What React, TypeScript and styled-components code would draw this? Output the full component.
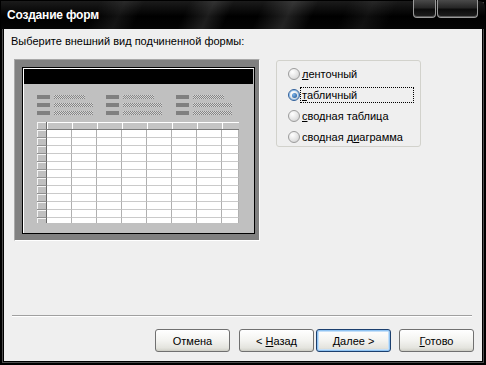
import React from 'react';
import styled, { createGlobalStyle } from 'styled-components';

const GlobalStyle = createGlobalStyle`
  html, body {
    margin: 0;
    padding: 0;
    background: #000;
  }
  * {
    box-sizing: border-box;
  }
`;

const Window = styled.div`
  width: 486px;
  height: 365px;
  display: flex;
  flex-direction: column;
  background: #000;
  border: 1px solid #000;
  padding: 0 3px 3px 3px;
  box-shadow: inset 0 0 0 1px #000, inset 0 0 0 2px #4e4e4e;
  font-family: 'Liberation Sans', Arial, sans-serif;
`;

const TitleBar = styled.div`
  height: 28px;
  margin: 0 -3px;
  padding: 0 4px 0 6px;
  display: flex;
  justify-content: space-between;
  align-items: flex-start;
  background:
    linear-gradient(115deg,
      transparent 0 20%,
      rgba(255, 255, 255, 0.07) 25%,
      transparent 29%,
      transparent 38%,
      rgba(255, 255, 255, 0.11) 43%,
      transparent 47%,
      transparent 53%,
      rgba(255, 255, 255, 0.13) 59%,
      transparent 64%,
      transparent 70%,
      rgba(255, 255, 255, 0.06) 75%,
      transparent 80%),
    linear-gradient(#1b1b1b, #000 55%, #050505);
  border-radius: 0 6px 0 0;
`;

const Title = styled.div`
  color: #fff;
  font-weight: bold;
  font-size: 12px;
  line-height: 28px;
  letter-spacing: -0.2px;
`;

const TitleButtons = styled.div`
  display: flex;
  gap: 1px;
  margin-top: -1px;
  margin-right: 3px;
`;

const TitleButton = styled.div<{ $w: number }>`
  width: ${({ $w }) => $w}px;
  height: 18px;
  border: 1px solid #9a9a9a;
  border-top: none;
  border-radius: 0 0 4px 4px;
  background: linear-gradient(#4a4a4a, #262626 45%, #0c0c0c 55%, #1e1e1e);
  box-shadow: inset 0 -1px 0 #5a5a5a;
`;

const Client = styled.div`
  flex: 1;
  display: flex;
  flex-direction: column;
  background: #efefef;
  padding: 6px 6px 9px 6px;
  font-size: 11px;
  color: #000;
`;

const Prompt = styled.div`
  line-height: 13px;
  padding-left: 1px;
`;

const ContentRow = styled.div`
  display: flex;
  align-items: flex-start;
  margin-top: 11px;
`;

const PreviewFrame = styled.div`
  margin-left: 4px;
  width: 246px;
  height: 182px;
  background: #808080;
  border: 1px solid;
  border-color: #a8a8a8 #ffffff #ffffff #a8a8a8;
  padding: 7px 0 0 7px;
`;

const PreviewPanel = styled.div`
  width: 233px;
  height: 167px;
  border: 1px solid #000;
  background: #c0c0c0;
  box-shadow: inset 1px 1px 0 #fff;
  padding: 1px 0 0 1px;
  display: flex;
  flex-direction: column;
`;

const FormHeader = styled.div`
  width: 229px;
  height: 15px;
  background: #000;
`;

const FieldColumns = styled.div`
  display: flex;
  margin: 11px 0 0 13px;
`;

const FieldColumn = styled.div`
  width: 69px;
  display: flex;
  flex-direction: column;
  gap: 4px;
  &:nth-child(2) {
    width: 70px;
  }
`;

const FieldRow = styled.div`
  display: flex;
  gap: 4px;
  height: 4px;
`;

const FieldLabel = styled.div`
  width: 13px;
  background: #808080;
`;

const FieldBox = styled.div<{ $w: number }>`
  width: ${({ $w }) => $w}px;
  background: repeating-conic-gradient(#858585 0 25%, #d6d6d6 0 50%) 0 0 / 2px 2px;
`;

const Table = styled.div`
  margin: 7px 0 0 13px;
  width: 202px;
  height: 101px;
  overflow: hidden;
  display: grid;
  grid-template-columns: 10px repeat(7, 25px) 17px;
  grid-auto-rows: 8px;
`;

type CellKind = 'corner' | 'head' | 'sel' | 'data';

const Cell = styled.div<{ $kind: CellKind }>`
  ${({ $kind }) => {
    switch ($kind) {
      case 'head':
        return `
          background: #c4c4c4;
          box-shadow: inset 1px 1px 0 #fff;
          border-bottom: 1px solid #7a7a7a;
        `;
      case 'corner':
      case 'sel':
        return `
          background: #c0c0c0;
          box-shadow: inset 1px 1px 0 #f4f4f4;
          border-bottom: 1px solid #909090;
          border-right: 1px solid #6a6a6a;
        `;
      default:
        return `
          background: #fff;
          border-right: 1px solid #b0b0b0;
          border-bottom: 1px solid #cacaca;
        `;
    }
  }}
`;

const RadioGroup = styled.div`
  margin: 1px 0 0 16px;
  width: 145px;
  height: 87px;
  border: 1px solid #d2d2cc;
  border-radius: 3px;
  padding: 5px 0 0 11px;
  display: flex;
  flex-direction: column;
  gap: 5px;
`;

const RadioItem = styled.div`
  height: 16px;
  display: flex;
  align-items: center;
`;

const RadioCircle = styled.span<{ $checked: boolean }>`
  width: 12px;
  height: 12px;
  flex: none;
  border-radius: 50%;
  border: 1px solid ${({ $checked }) => ($checked ? '#2f5f9a' : '#9c9c9c')};
  background: radial-gradient(circle at 35% 30%, #ffffff, #e2e2e2 60%, #c8c8c8);
  box-shadow: ${({ $checked }) => ($checked ? 'inset 0 0 0 1px #8ec0f0' : 'none')};
  display: flex;
  align-items: center;
  justify-content: center;

  &::after {
    content: '';
    display: ${({ $checked }) => ($checked ? 'block' : 'none')};
    width: 5px;
    height: 5px;
    border-radius: 50%;
    background: radial-gradient(circle at 35% 35%, #7ab4ec, #1d4f8c);
  }
`;

const RadioLabel = styled.span<{ $focused: boolean }>`
  padding: 0 1px;
  line-height: 14px;
  width: ${({ $focused }) => ($focused ? '114px' : 'auto')};
  border: 1px dotted ${({ $focused }) => ($focused ? '#000' : 'transparent')};
  white-space: nowrap;
`;

const Separator = styled.div`
  margin: auto 4px 0 2px;
  height: 2px;
  border-top: 1px solid #a0a0a0;
  border-bottom: 1px solid #ffffff;
`;

const ButtonRow = styled.div`
  display: flex;
  justify-content: flex-end;
  margin-top: 12px;
  padding-right: 2px;
`;

const Button = styled.button<{ $default?: boolean; $gap: number }>`
  width: 75px;
  height: 23px;
  margin-left: ${({ $gap }) => $gap}px;
  padding: 0;
  font-family: 'Liberation Sans', Arial, sans-serif;
  font-size: 11px;
  color: #000;
  border: 1px solid ${({ $default }) => ($default ? '#1c3f6e' : '#707070')};
  border-radius: 3px;
  background: linear-gradient(#ffffff, #f3f3f0 50%, #e4e4de 85%, #d0d0c8);
  box-shadow: ${({ $default }) =>
    $default
      ? 'inset 0 0 0 1px #8fc3f2, inset 0 0 0 2px #c6e0f8'
      : 'inset 0 -1px 0 #d0d0c8'};
`;

const fields = [31, 39, 39];

const App: React.FC = () => {
  const rows = 13;
  const cols = 9;

  const cells: React.ReactNode[] = [];
  for (let r = 0; r < rows; r++) {
    for (let c = 0; c < cols; c++) {
      let kind: CellKind = 'data';
      if (r === 0 && c === 0) kind = 'corner';
      else if (r === 0) kind = 'head';
      else if (c === 0) kind = 'sel';
      cells.push(<Cell key={`${r}-${c}`} $kind={kind} />);
    }
  }

  return (
    <>
      <GlobalStyle />
      <Window>
        <TitleBar>
          <Title>Создание форм</Title>
          <TitleButtons>
            <TitleButton $w={23} />
            <TitleButton $w={41} />
          </TitleButtons>
        </TitleBar>
        <Client>
          <Prompt>Выберите внешний вид подчиненной формы:</Prompt>
          <ContentRow>
            <PreviewFrame>
              <PreviewPanel>
                <FormHeader />
                <FieldColumns>
                  {[0, 1, 2].map((col) => (
                    <FieldColumn key={col}>
                      {fields.map((w, i) => (
                        <FieldRow key={i}>
                          <FieldLabel />
                          <FieldBox $w={w} />
                        </FieldRow>
                      ))}
                    </FieldColumn>
                  ))}
                </FieldColumns>
                <Table>{cells}</Table>
              </PreviewPanel>
            </PreviewFrame>
            <RadioGroup>
              <RadioItem>
                <RadioCircle $checked={false} />
                <RadioLabel $focused={false}>
                  <u>л</u>енточный
                </RadioLabel>
              </RadioItem>
              <RadioItem>
                <RadioCircle $checked />
                <RadioLabel $focused>
                  <u>т</u>абличный
                </RadioLabel>
              </RadioItem>
              <RadioItem>
                <RadioCircle $checked={false} />
                <RadioLabel $focused={false}>
                  <u>с</u>водная таблица
                </RadioLabel>
              </RadioItem>
              <RadioItem>
                <RadioCircle $checked={false} />
                <RadioLabel $focused={false}>
                  сводная д<u>и</u>аграмма
                </RadioLabel>
              </RadioItem>
            </RadioGroup>
          </ContentRow>
          <Separator />
          <ButtonRow>
            <Button $gap={0}>Отмена</Button>
            <Button $gap={9}>
              &lt; <u>Н</u>азад
            </Button>
            <Button $gap={2} $default>
              <u>Д</u>алее &gt;
            </Button>
            <Button $gap={8}>
              <u>Г</u>отово
            </Button>
          </ButtonRow>
        </Client>
      </Window>
    </>
  );
};

export default App;
